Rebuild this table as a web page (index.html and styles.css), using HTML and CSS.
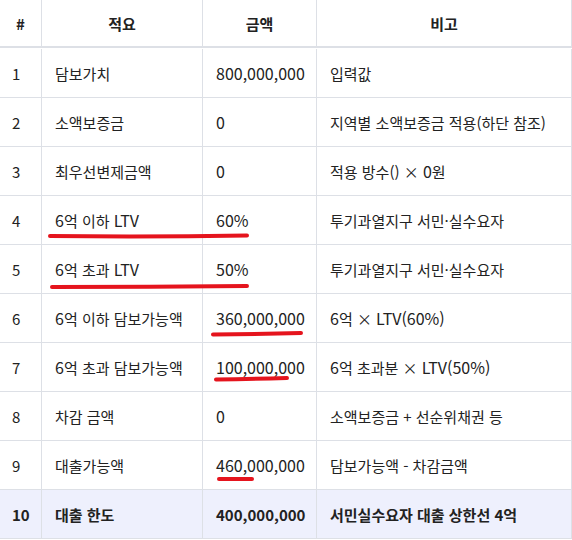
FILE: index.html
```html
<!DOCTYPE html>
<html lang="ko">
<head>
<meta charset="utf-8">
<link rel="stylesheet" href="styles.css">
</head>
<body>
<div class="wrap">
  <div class="grid">
    <div class="c h num">#</div>
    <div class="c h">적요</div>
    <div class="c h">금액</div>
    <div class="c h">비고</div>

    <div class="c num">1</div><div class="c">담보가치</div><div class="c"><span class="en">800,000,000</span></div><div class="c">입력값</div>
    <div class="c num">2</div><div class="c">소액보증금</div><div class="c"><span class="en">0</span></div><div class="c">지역별 소액보증금 적용(하단 참조)</div>
    <div class="c num">3</div><div class="c">최우선변제금액</div><div class="c"><span class="en">0</span></div><div class="c">적용 방수() × <span class="en">0</span>원</div>
    <div class="c num">4</div><div class="c"><span class="en">6</span>억 이하 <span class="en">LTV</span></div><div class="c"><span class="en">60%</span></div><div class="c">투기과열지구 서민·실수요자</div>
    <div class="c num">5</div><div class="c"><span class="en">6</span>억 초과 <span class="en">LTV</span></div><div class="c"><span class="en">50%</span></div><div class="c">투기과열지구 서민·실수요자</div>
    <div class="c num">6</div><div class="c"><span class="en">6</span>억 이하 담보가능액</div><div class="c"><span class="en">360,000,000</span></div><div class="c"><span class="en">6</span>억 × <span class="en">LTV(60%)</span></div>
    <div class="c num">7</div><div class="c"><span class="en">6</span>억 초과 담보가능액</div><div class="c"><span class="en">100,000,000</span></div><div class="c"><span class="en">6</span>억 초과분 × <span class="en">LTV(50%)</span></div>
    <div class="c num">8</div><div class="c">차감 금액</div><div class="c"><span class="en">0</span></div><div class="c">소액보증금 + 선순위채권 등</div>
    <div class="c num">9</div><div class="c">대출가능액</div><div class="c"><span class="en">460,000,000</span></div><div class="c">담보가능액 - 차감금액</div>
    <div class="c num t">10</div><div class="c t">대출 한도</div><div class="c t">400,000,000</div><div class="c t">서민실수요자 대출 상한선 4억</div>
  </div>
  <svg class="marks" width="572" height="540" viewBox="0 0 572 540">
    <path d="M50 236 Q150 237 247 235.5"/>
    <path d="M52 287 Q150 287 247 286"/>
    <path d="M213 334.5 Q260 334 301 333"/>
    <path d="M216 379.5 Q250 379 287 378"/>
    <path d="M219 479 L252 479"/>
  </svg>
</div>
</body>
</html>
```
FILE: styles.css
```css
html, body {
  margin: 0;
  padding: 0;
  background: #fff;
}
.wrap {
  position: relative;
  width: 572px;
  height: 540px;
}
.grid {
  display: grid;
  grid-template-columns: 42px 161px 114px 255px;
  grid-auto-rows: 49px;
  font-family: "Noto Sans CJK KR", sans-serif;
  font-size: 15px;
  color: #222;
}
.c {
  box-sizing: border-box;
  border-right: 1px solid #dde0e6;
  border-bottom: 1px solid #dde0e6;
  padding: 0 12px 0 13px;
  display: flex;
  align-items: center;
  white-space: pre;
}
.en {
  font-size: 16px;
  line-height: 1;
}
.c.num {
  padding-left: 12px;
}
.c.h {
  height: 48px;
  border-bottom: 2px solid #dde0e6;
  justify-content: center;
  font-weight: 700;
  padding: 0;
}
.c.t {
  background: #eef0fd;
  font-weight: 700;
}
.marks {
  position: absolute;
  left: 0;
  top: 0;
  pointer-events: none;
}
.marks path {
  fill: none;
  stroke: #e5141d;
  stroke-width: 4;
  stroke-linecap: round;
}
```
